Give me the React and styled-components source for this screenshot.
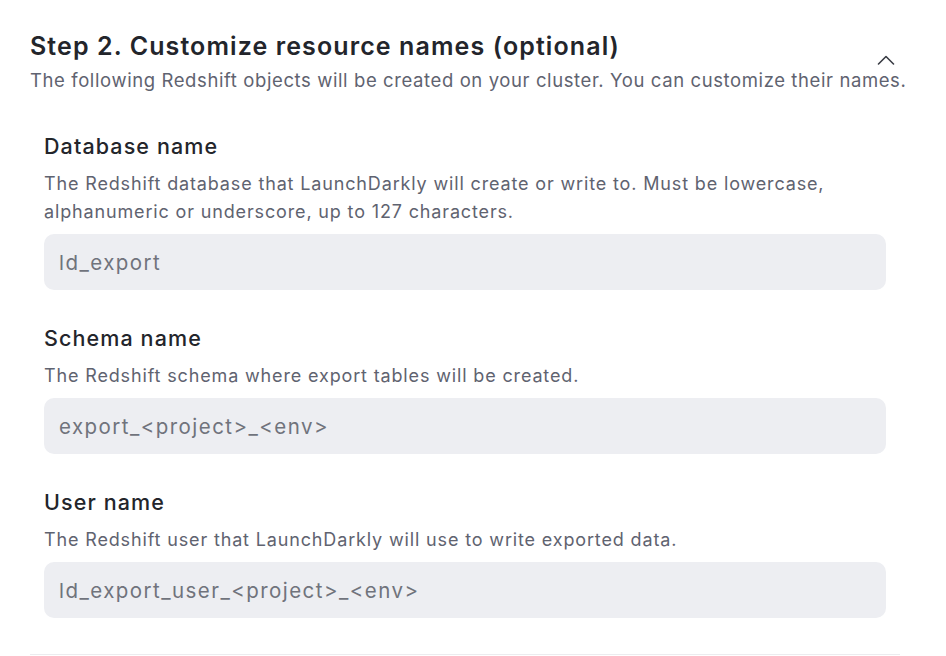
import styled, { createGlobalStyle } from "styled-components";

const GlobalStyle = createGlobalStyle`
  body {
    margin: 0;
    background: #ffffff;
    font-family: Inter, "Noto Sans", sans-serif;
    -webkit-font-smoothing: antialiased;
  }
`;

const Section = styled.section`
  width: 870px;
  padding: 30px 0 0 30px;
`;

const Header = styled.div`
  position: relative;
`;

const Title = styled.h2`
  margin: 0;
  font-size: 25px;
  line-height: 32px;
  font-weight: 600;
  color: #23252b;
  letter-spacing: 1.1px;
`;

const Subtitle = styled.p`
  margin: 5px 0 0;
  font-size: 18.5px;
  line-height: 26px;
  color: #5f6370;
  letter-spacing: 0.6px;
  white-space: nowrap;
`;

const CollapseButton = styled.button`
  position: absolute;
  top: 20px;
  right: 0;
  width: 28px;
  height: 20px;
  padding: 0;
  border: none;
  background: transparent;
  display: flex;
  align-items: center;
  justify-content: center;
  cursor: pointer;
  color: #3a3d45;
`;

const Fields = styled.div`
  display: flex;
  flex-direction: column;
  gap: 32px;
  padding: 37px 14px 36px;
  border-bottom: 1px solid #ececef;
`;

const Field = styled.div`
  display: flex;
  flex-direction: column;
`;

const Label = styled.label`
  padding-top: 2px;
  font-size: 21.5px;
  line-height: 28px;
  font-weight: 500;
  color: #23252b;
  letter-spacing: 1.1px;
`;

const Help = styled.p`
  margin: 10px 0 8px;
  font-size: 18px;
  line-height: 28px;
  color: #5f6370;
  letter-spacing: 0.85px;
`;

const Input = styled.input`
  box-sizing: border-box;
  width: 100%;
  height: 56px;
  padding: 0 15px;
  border: none;
  border-radius: 10px;
  background: #edeef2;
  font-family: Inter, "Noto Sans", sans-serif;
  font-size: 20.5px;
  letter-spacing: 1.45px;
  color: #23252b;
  outline: none;
  &::placeholder {
    color: #70737c;
  }
`;

const fields = [
  {
    label: "Database name",
    help: "The Redshift database that LaunchDarkly will create or write to. Must be lowercase, alphanumeric or underscore, up to 127 characters.",
    placeholder: "ld_export",
  },
  {
    label: "Schema name",
    help: "The Redshift schema where export tables will be created.",
    placeholder: "export_<project>_<env>",
  },
  {
    label: "User name",
    help: "The Redshift user that LaunchDarkly will use to write exported data.",
    placeholder: "ld_export_user_<project>_<env>",
  },
];

const App = () => {
  return (
    <>
      <GlobalStyle />
      <Section>
        <Header>
          <Title>Step 2. Customize resource names (optional)</Title>
          <Subtitle>
            The following Redshift objects will be created on your cluster. You can customize their names.
          </Subtitle>
          <CollapseButton aria-label="Collapse">
            <svg width="18" height="10" viewBox="0 0 18 10" fill="none">
              <path d="M1.5 9L9 1.5L16.5 9" stroke="currentColor" strokeWidth="1.6" strokeLinecap="round" strokeLinejoin="round" />
            </svg>
          </CollapseButton>
        </Header>
        <Fields>
          {fields.map((f) => (
            <Field key={f.label}>
              <Label>{f.label}</Label>
              <Help>{f.help}</Help>
              <Input placeholder={f.placeholder} />
            </Field>
          ))}
        </Fields>
      </Section>
    </>
  );
};

export default App;
